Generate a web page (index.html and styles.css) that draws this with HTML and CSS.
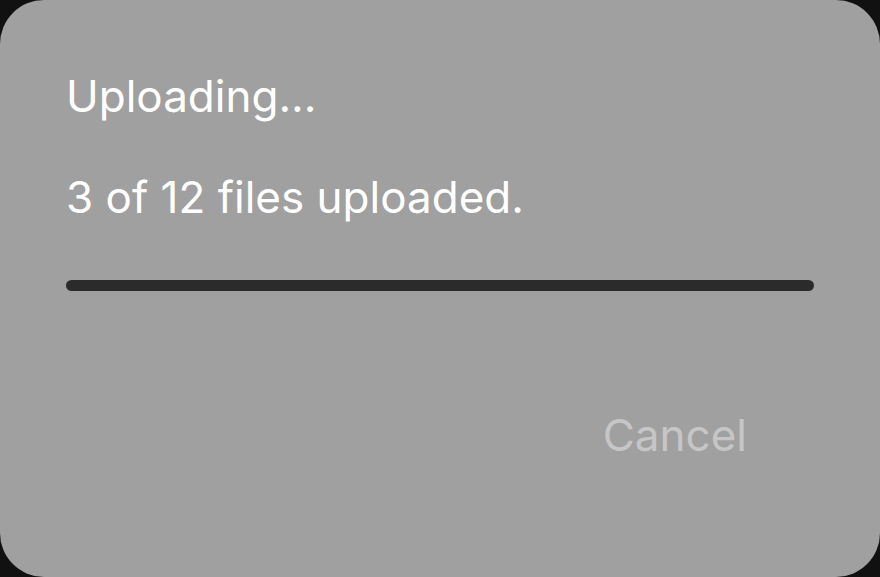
FILE: index.html
```html
<!DOCTYPE html>
<html>
<head>
<meta charset="utf-8">
<link rel="stylesheet" href="styles.css">
</head>
<body>
<div class="dialog">
  <h1 class="title">Uploading...</h1>
  <p class="message">3 of 12 files uploaded.</p>
  <div class="progress"><div class="progress-fill"></div></div>
  <div class="actions">
    <button class="btn-cancel">Cancel</button>
  </div>
</div>
</body>
</html>
```

FILE: styles.css
```css
html, body {
  margin: 0;
  padding: 0;
  background: #111111;
  width: 880px;
  height: 577px;
  overflow: hidden;
}
.dialog {
  box-sizing: border-box;
  width: 880px;
  height: 577px;
  background: #a0a0a0;
  border-radius: 44px;
  padding: 69px 66px 0 66px;
  display: flex;
  flex-direction: column;
  font-family: Inter, "Noto Sans", sans-serif;
  color: #ffffff;
}
.title {
  margin: 0;
  font-size: 44px;
  font-weight: 400;
  line-height: 54px;
}
.message {
  margin: 47px 0 0 0;
  font-size: 44px;
  line-height: 54px;
}
.progress {
  margin-top: 56px;
  height: 11px;
  border-radius: 6px;
  background: #2b2b2b;
  overflow: hidden;
}
.progress-fill {
  height: 100%;
  width: 100%;
  background: #2b2b2b;
}
.actions {
  display: flex;
  justify-content: flex-end;
  padding-right: 67px;
  margin-top: 117px;
}
.btn-cancel {
  background: none;
  border: none;
  padding: 0;
  font-family: Inter, "Noto Sans", sans-serif;
  font-size: 44px;
  line-height: 54px;
  color: #c6c6c6;
}
```
